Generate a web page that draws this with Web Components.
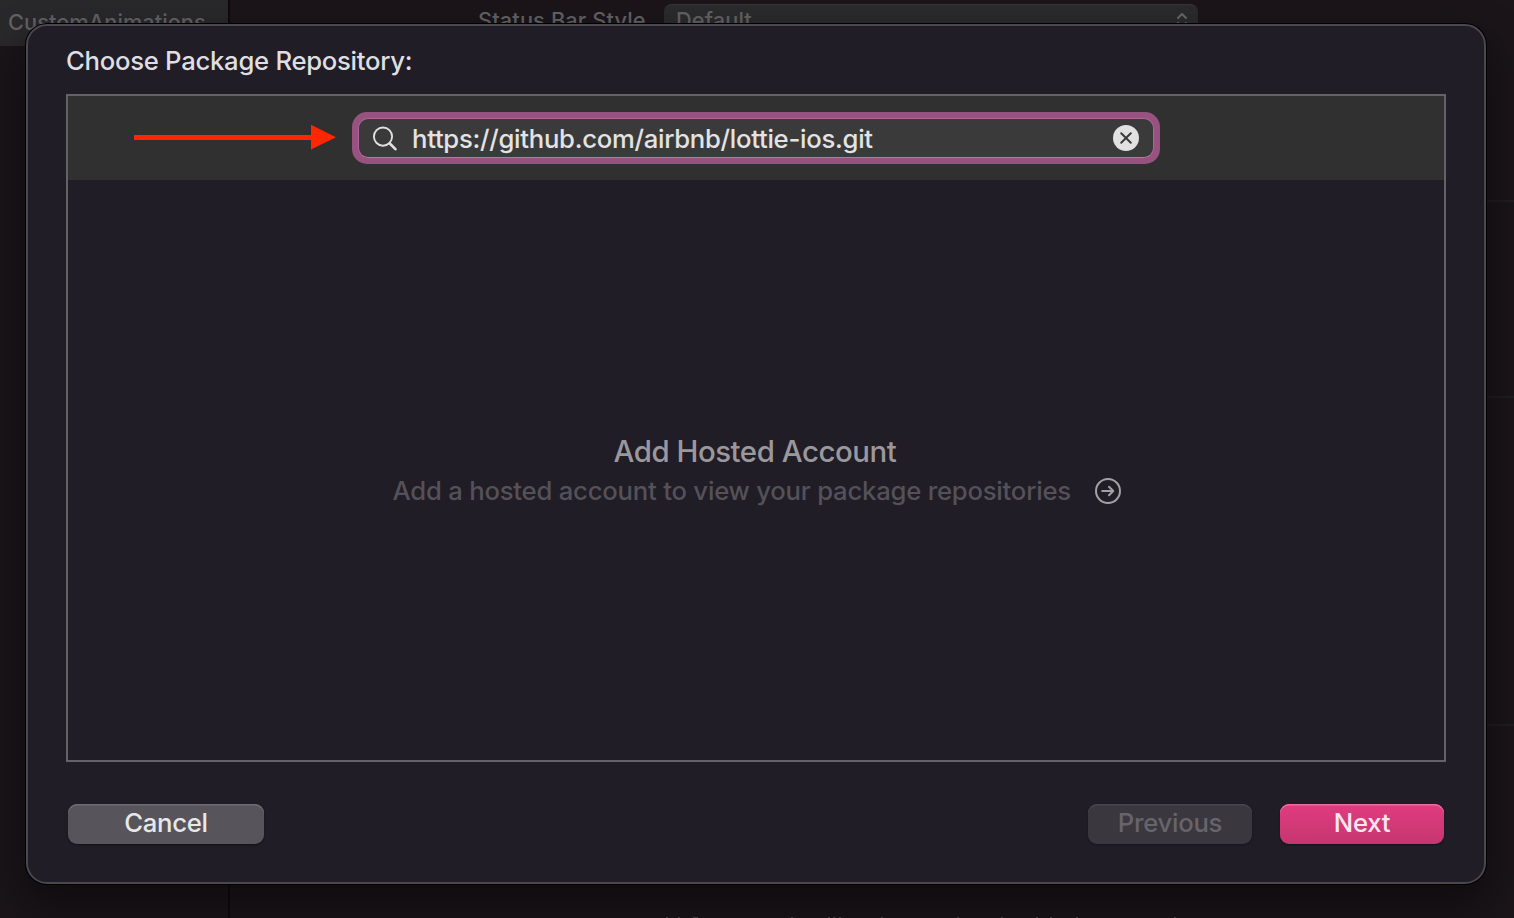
<!DOCTYPE html>
<html lang="en">
<head>
<meta charset="utf-8">
<title>Choose Package Repository</title>
<style>
html,body{margin:0;height:100%;overflow:hidden;background:#1b1519}
body{font-family:Inter,"Liberation Sans",sans-serif;-webkit-font-smoothing:antialiased}
</style>
</head>
<body>
<xcode-backdrop></xcode-backdrop>
<sheet-dialog>
  <fit-text slot="title" w="345.5" size="25.7">Choose Package Repository:</fit-text>
  <search-field slot="toolbar">https://github.com/airbnb/lottie-ios.git</search-field>
  <hosted-account slot="content"></hosted-account>
  <push-button slot="leading" w="82.5" style="width:196px">Cancel</push-button>
  <push-button slot="trailing" w="103.5" kind="disabled" style="width:164px">Previous</push-button>
  <push-button slot="trailing" w="55.5" kind="primary" style="width:164px">Next</push-button>
</sheet-dialog>
<script>
const define=(name,html,ready)=>customElements.define(name,class extends HTMLElement{
  constructor(){super();this.attachShadow({mode:'open'}).innerHTML=html;}
  connectedCallback(){if(ready)ready.call(this,this.shadowRoot);}
});

// Single-line label whose tracking is set so that it spans the width in "w".
define('fit-text',`<style>
:host{display:inline-block;white-space:nowrap;line-height:32px;font-weight:450}
span{display:inline-block}
</style><span><slot></slot></span>`,function(root){
  const s=root.querySelector('span'),n=this.textContent.length;
  s.style.fontSize=this.getAttribute('size')+'px';
  const ls=(+this.getAttribute('w')+.8-s.getBoundingClientRect().width)/n;
  s.style.letterSpacing=ls.toFixed(3)+'px';
});

define('xcode-backdrop',`<style>
:host{display:flex;height:918px;background:#1b1519;color:#626164;overflow:hidden}
.side{width:228px;border-right:2px solid #0d0b0d;box-sizing:content-box}
.tab{height:46px;background:#29282a;padding:6px 0 0 8px;box-sizing:border-box}
.main{flex:1;display:flex;flex-direction:column}
.row{display:flex;padding-left:248px;height:200px;box-sizing:border-box}
.label{padding-top:4px;width:186px}
.pop{margin-top:4px;width:534px;height:40px;box-sizing:border-box;border-radius:8px;background:#2b2a2c;border-top:1px solid #363537;display:flex;justify-content:space-between;padding:0 9px 0 12px}
.pop fit-text{margin-top:-1px}
.pop svg{margin-top:7px}
hr{margin:0;border:0;height:2px;background:#211d21}
.gap1{height:194px}.gap2{height:326px}.gap3{flex:1;display:flex;align-items:flex-end}
.gap3 svg{display:block;margin-left:430px}
</style>
<div class="side"><div class="tab"><fit-text w="197" size="21.8">CustomAnimations</fit-text></div></div>
<div class="main">
  <div class="row"><div class="label"><fit-text w="167" size="21.8">Status Bar Style</fit-text></div>
    <div class="pop"><fit-text w="75" size="21.8">Default</fit-text>
    <svg width="14" height="20" viewBox="0 0 14 20" fill="none" stroke="#68676a" stroke-width="2" stroke-linecap="round" stroke-linejoin="round"><path d="M3 6l4-4 4 4M3 11l4 4 4-4"/></svg></div></div>
  <hr><div class="gap1"></div><hr><div class="gap2"></div><hr>
  <div class="gap3"><svg width="520" height="1" viewBox="0 0 520 1"><path d="M6 .5h2M18 .5h2M33 .5h5M131 .5h2M168 .5h2M173 .5h2M179 .5h2M221 .5h2M297 .5h2M341 .5h2M376 .5h2M390 .5h2M416 .5h2M514 .5h2" stroke="#4a484b"/></svg></div>
</div>`);

define('sheet-dialog',`<style>
:host{position:absolute;left:26px;top:24px;width:1460px;height:860px;box-sizing:border-box;border:2px solid #4a474d;border-radius:21px;background:#201d26;box-shadow:0 0 0 1px #000,0 20px 40px 6px rgba(0,0,0,.42);color:#dfdee0;display:flex;flex-direction:column;padding:19px 38px 38px}
header{height:49px}
.box{border:2px solid #656265;height:664px;display:flex;flex-direction:column}
.bar{height:84px;background:#303030;display:flex;align-items:center}
.content{flex:1;display:flex;flex-direction:column}
.arrow{margin-left:66px;margin-right:16px;margin-top:-2px}
footer{display:flex;justify-content:space-between;margin-top:42px;padding:0 2px}
.end{display:flex;gap:28px}
</style>
<header><slot name="title"></slot></header>
<div class="box">
  <div class="bar"><svg class="arrow" width="202" height="26" viewBox="0 0 202 26"><path fill="#ff2600" d="M0 11H177V.8L202 13.2 177 25.5V16H0z"/></svg><slot name="toolbar"></slot></div>
  <div class="content"><slot name="content"></slot></div>
</div>
<footer><slot name="leading"></slot><div class="end"><slot name="trailing"></slot></div></footer>`);

define('search-field',`<style>
:host{display:block;width:808px;height:52px;box-sizing:border-box;background:#97527f;border-radius:15px;padding:6px}
.in{height:40px;box-sizing:border-box;border:1px solid #b0639a;border-bottom-color:#b878a0;border-radius:10px;background:#3a3a3a;display:flex;align-items:center;padding:0 14px 0 13px;color:#e3e3e3}
.t{margin-left:14px;flex:1;height:32px;padding-top:2px}
svg{flex:none;display:block}
</style>
<div class="in"><svg width="26" height="26" viewBox="0 0 26 26" fill="none" stroke="#e0e0e0" stroke-linecap="round"><circle cx="11" cy="11.6" r="9.1" stroke-width="1.9"/><path d="M17.8 18.5L23.4 24.2" stroke-width="2.6"/></svg>
<div class="t"></div>
<svg width="26" height="26" viewBox="0 0 26 26"><circle cx="13" cy="13" r="13" fill="#e1e1e1"/><path d="M8.2 8.2l9.6 9.6M17.8 8.2L8.2 17.8" stroke="#3a3a3a" stroke-width="2" stroke-linecap="round"/></svg></div>`,function(root){
  root.querySelector('.t').innerHTML='<fit-text w="460" size="25.7">'+this.textContent+'</fit-text>';
});

define('hosted-account',`<style>
:host{display:flex;flex-direction:column;padding-top:256px}
.h{padding-left:545.5px;color:#9a989c;height:37px}
.s{padding-left:324.5px;color:#545158;display:flex;align-items:center;gap:24px;height:36px}
.s fit-text{padding-top:2px}
svg{display:block}
</style>
<div class="h"><fit-text w="282" size="29.4">Add Hosted Account</fit-text></div>
<div class="s"><fit-text w="677.6" size="25.7">Add a hosted account to view your package repositories</fit-text>
<svg width="26" height="26" viewBox="0 0 26 26" fill="none" stroke="#a3a1a4" stroke-width="2" stroke-linecap="round" stroke-linejoin="round"><circle cx="13" cy="13" r="12"/><path d="M7.2 13H18.3M14 8.7l4.3 4.3-4.3 4.3"/></svg></div>`);

define('push-button',`<style>
:host{display:flex;justify-content:center;height:40px;box-sizing:border-box;border-radius:9px;background:#57555b;box-shadow:inset 0 1.5px 0 #6f6d73,0 1px 2px rgba(0,0,0,.45);color:#e8e8e9;padding-top:3px}
:host([kind=disabled]){background:#3a373e;color:#67646a;box-shadow:inset 0 1.5px 0 #48454c,0 1px 2px rgba(0,0,0,.3)}
:host([kind=primary]){background:linear-gradient(#e03c80,#c53670);color:#fde5ef;box-shadow:inset 0 1.5px 0 #ea6ca0,0 1px 2px rgba(0,0,0,.45)}
</style><div class="t"></div>`,function(root){
  root.querySelector('.t').innerHTML='<fit-text w="'+this.getAttribute('w')+'" size="25.7">'+this.textContent+'</fit-text>';
});
</script>
</body>
</html>
